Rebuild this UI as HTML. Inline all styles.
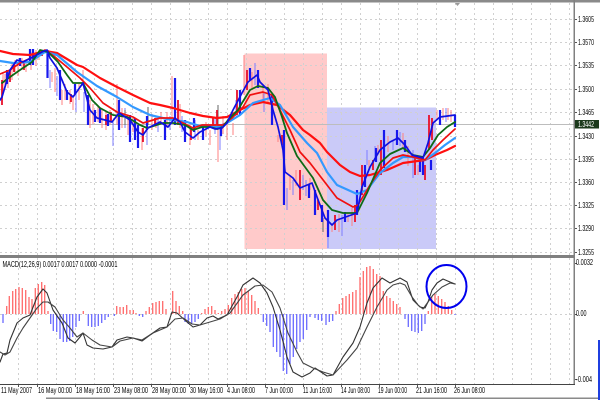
<!DOCTYPE html>
<html><head><meta charset="utf-8"><style>
html,body{margin:0;padding:0;background:#fff;width:600px;height:400px;overflow:hidden}
svg{display:block;filter:blur(.3px)}
text{font-family:"Liberation Sans",sans-serif;font-size:8px;fill:#000}
.l{fill:none;stroke-linejoin:round;stroke-linecap:round}
</style></head><body>
<svg width="600" height="400" viewBox="0 0 600 400" xmlns="http://www.w3.org/2000/svg">
<rect x="244.5" y="53.5" width="82.5" height="195.5" fill="#ffcaca"/>
<rect x="327" y="107.5" width="109" height="141.5" fill="#cacaf8"/>
<path fill="none" stroke="#d0d0d0" stroke-dasharray="2 3" d="M18.5 3V255M37.5 3V255M56.5 3V255M75.5 3V255M94.5 3V255M113.5 3V255M132.5 3V255M151.5 3V255M170.5 3V255M189.5 3V255M208.5 3V255M227.5 3V255M246.5 3V255M265.5 3V255M284.5 3V255M303.5 3V255M322.5 3V255M341.5 3V255M360.5 3V255M379.5 3V255M398.5 3V255M417.5 3V255M436.5 3V255M455.5 3V255M474.5 3V255M493.5 3V255M512.5 3V255M531.5 3V255M550.5 3V255M569.5 3V255
M18.5 258V384M37.5 258V384M56.5 258V384M75.5 258V384M94.5 258V384M113.5 258V384M132.5 258V384M151.5 258V384M170.5 258V384M189.5 258V384M208.5 258V384M227.5 258V384M246.5 258V384M265.5 258V384M284.5 258V384M303.5 258V384M322.5 258V384M341.5 258V384M360.5 258V384M379.5 258V384M398.5 258V384M417.5 258V384M436.5 258V384M455.5 258V384M474.5 258V384M493.5 258V384M512.5 258V384M531.5 258V384M550.5 258V384M569.5 258V384
M0 19.5H574M0 42.5H574M0 65.5H574M0 89.5H574M0 112.5H574M0 136.5H574M0 159.5H574M0 182.5H574M0 205.5H574M0 228.5H574M0 252.5H574M0 314.5H574"/>
<path stroke="#bdbdbd" d="M0 124.5H574"/>

<!-- candles: wicks -->
<path fill="none" stroke="#ff8080" d="M3 72V92M5 74V90M8 70V88M12 62V80M15 60V72M18 64V76M22 58V70M26 60V72M31 52V70M36 50V66M39 52V60M52 72V82M55 68V92M62 90V105M65 84V100M70 90V104M73 95V110M79 84V100M83 70V85M90 100V128M93 104V124M98 106V122M102 110V128M106 112V130M110 110V124M117 84V125M122 108V128M128 115V135M133 118V132M142 128V150M152 114V130M156 116V128M161 112V124M167 112V128M172 76V122M180 104V128M190 125V145M198 130V140M206 122V136M210 130V145M218 123V162M223 116V134M227 125V140M233 123V135M244 55V95M252 72V90M263 85V100M268 84V104M278 135V142M290 175V190M296 170V186M310 178V190M332 225V232M339 214V232M348 213V222M352 208V226M369 160V170M378 145V155M388 136V152M403 133V148M408 146V166M418 165V175M437 110V120M443 108V120M448 108V120M451 110V122"/>
<path fill="none" stroke="#7c7cff" d="M50 70V88M57 76V96M76 92V112M84 92V112M113 120V146M125 108V128M147 130V145M158 118V132M170 116V130M182 116V132M195 120V140M215 118V134M220 125V150M236 100V116M255 63V85M264 92V112M287 188V210M293 180V195M303 175V190M306 180V196M328 237V248M342 215V236M393 140V150M413 150V178M367 150V165M375 146V160M400 132V146M446 108V122"/>
<path fill="none" stroke="#666" d="M125 110V125M148 107V125M218 105V130M323 218V232"/>
<!-- candles: bodies -->
<path fill="none" stroke="#e8102a" stroke-width="1.8" d="M2 80V105M10 70V82M14 64V72M24 62V70M42 50V56M71 94V102M106 115V125M111 112V122M143 128V142M155 118V126M178 100V125M191 128V140M213 118V127M217 110V125M237 90V115M247 70V90M282 135V145M300 170V200M318 200V210M335 215V230M355 205V222M362 165V195M373 160V170M381 140V175M415 158V175M425 165V180M429 115V150M432 118V140"/>
<path fill="none" stroke="#1818ee" stroke-width="2.2" d="M7 70V84M20 58V66M30 49V65M33 49V65M47.5 50V78M60 70V100M67 90V100M75 84V94M88 95V125M95 110V122M100 108V123M108 114V126M119 100V130M130 115V142M135 118V140M138 125V148M147 116V130M165 120V140M175 78V125M185 120V142M194 118V132M203 125V140M221 126V136M240 90V115M250 68V80M258 70V88M272 95V125M284 130V205M309 184V198M315 190V215M322 205V222M328 210V237M345 212V222M357 190V215M365 165V187M376 148V162M384 130V168M397 130V145M405 140V152M420 160V172M423 158V175M431 160V170M440 110V125M455 115V127"/>

<!-- moving averages -->
<path class="l" stroke="#ff1010" stroke-width="2.2" d="M0 51L13 54L30 55L45 51L57 53L77 65L83 67L100 78L117 87L133 95L150 103L160 105L173 108L190 113L203 116L217 118L227 117L240 110L250 105L263 102L277 105L290 115L303 130L310 135L320 143L327 152L340 165L350 172L360 176L370 175L387 170L403 163L425 160L435 155L447 150L455 146"/>
<path class="l" stroke="#3399ff" stroke-width="2.2" d="M0 61L13 63L30 62L45 52L57 55L77 72L97 86L117 97L133 107L150 115L167 119L187 122L200 126L217 127L227 123L240 115L253 103L270 98L280 105L293 127L307 143L317 153L327 172L337 185L357 194L367 190L380 173L393 163L403 157L413 157L425 160L435 153L445 145L455 138"/>
<path class="l" stroke="#f01010" stroke-width="1.7" d="M0 74L10 70L20 63L33 57L45 50L55 57L67 67L80 78L90 88L103 103L117 112L133 117L143 123L160 118L173 118L183 123L193 128L202 125L213 125L223 125L232 118L243 107L250 95L263 92L272 95L280 110L290 130L300 152L310 163L327 185L337 198L353 207L358 205L370 185L380 170L393 158L403 155L413 157L425 160L433 150L443 140L455 129"/>
<path class="l" stroke="#0e6a16" stroke-width="1.8" d="M2 83L10 77L20 70L32 62L40 50L48 52L58 62L67 75L73 83L83 83L92 100L100 108L113 115L127 117L140 125L147 128L163 123L173 123L185 125L193 130L202 127L210 127L217 129L223 127L228 120L238 110L242 103L250 90L258 86L268 88L275 97L282 117L287 133L297 156L313 178L323 200L332 210L343 213L357 213L367 193L380 163L390 154L403 148L413 155L423 157L430 148L438 135L447 127L455 122"/>
<path class="l" stroke="#1010e0" stroke-width="1.7" d="M0 100L2 97L10 70L17 60L23 62L33 57L42 52L47 50L50 58L57 68L62 80L67 92L73 97L83 83L88 103L90 110L97 118L105 120L112 122L119 113L130 120L138 132L143 135L148 128L160 122L168 127L175 118L180 122L185 132L193 138L200 132L210 127L215 129L222 128L227 123L233 110L242 93L248 82L257 75L260 82L268 90L273 110L278 127L283 150L285 172L293 178L300 188L312 183L317 197L325 218L332 225L337 220L357 213L362 187L370 167L380 150L390 142L398 138L405 145L412 155L423 158L428 143L433 123L440 117L455 115"/>

<rect x="0" y="0" width="600" height="2.5" fill="#8a8a8a"/>
<path fill="#999" d="M455 3H460L457.5 6Z"/>
<rect x="0" y="255" width="574" height="3" fill="#808080"/>
<rect x="573.5" y="0" width="1.5" height="385" fill="#808080"/>
<rect x="0" y="384" width="575" height="1" fill="#444"/>
<path stroke="#555" fill="none" d="M575 19.5h2M575 42.5h2M575 65.5h2M575 89.5h2M575 112.5h2M575 136.5h2M575 159.5h2M575 182.5h2M575 205.5h2M575 228.5h2M575 252.5h2M575 263.5h2M575 314.5h2M575 379.5h2M18.5 385v2M37.5 385v2M75.5 385v2M113.5 385v2M151.5 385v2M189.5 385v2M227.5 385v2M265.5 385v2M303.5 385v2M341.5 385v2M379.5 385v2M417.5 385v2M455.5 385v2"/>

<!-- histogram -->
<path fill="none" stroke="#ff6a6a" stroke-width="1.3" d="M6.7 314v-8M9.3 314v-18M12.7 314v-23M15.7 314v-25M19 314v-27M22.3 314v-26M25.7 314v-24M29 314v-17M32 314v-15M35.3 314v-26M38.3 314v-30M41.7 314v-32M44.7 314v-29M48 314v-3M83.3 314v-3M116.7 314v-8M120 314v-7M123.3 314v-7M126.7 314v-9M130 314v-4M133.3 314v-4M136 314v-1M146 314v-3M149.3 314v-7M152.7 314v-11M156 314v-12M159.3 314v-13M162.7 314v-13M166 314v-5M172.7 314v-23M176 314v-13M179.3 314v-8M182.7 314v-3
M201.7 314v-1M205 314v-5M208.3 314v-7M211.7 314v-8M215 314v-4M218.3 314v-1M221.7 314v-3M225 314v-5M228.3 314v-9M231.7 314v-16M235 314v-20M238.3 314v-22M241.7 314v-25M245 314v-26M248.3 314v-23M251.7 314v-19M255 314v-13M258.3 314v-6
M336 314v-3M339.3 314v-10M342.7 314v-16M346 314v-18M349.3 314v-20M352.7 314v-22M356 314v-24M360 314v-37M363.3 314v-43M366.7 314v-47M370 314v-48M373.3 314v-45M376.7 314v-40M380 314v-38M383.3 314v-23M386.7 314v-18M390 314v-16M393.3 314v-13M396.7 314v-10M400 314v-7
M428.3 314v-3M431.7 314v-17M435 314v-20M438.3 314v-18M441.7 314v-15M445 314v-12M448.3 314v-8M451.7 314v-4"/>
<path fill="none" stroke="#6a6aff" stroke-width="1.3" d="M3 314v9M50.7 314v10M53.3 314v17M56.7 314v18M60 314v25M63.3 314v28M66.7 314v28M69.7 314v27M72.7 314v23M76 314v13M79.3 314v7M88.3 314v12M91.7 314v13M95 314v13M98.3 314v12M101.7 314v9M105 314v6M108.3 314v3M114.3 314v2M139.3 314v2M142.7 314v3M185 314v8M188.3 314v10M191.7 314v10M195 314v8M198.3 314v5
M263.3 314v8M266.7 314v12M270 314v18M273.3 314v33M276.7 314v38M280 314v43M283.3 314v57M286.7 314v60M290 314v50M293.3 314v43M296.7 314v35M300 314v28M303.3 314v25M306.7 314v16M310 314v3M315 314v4M318.3 314v6M321.7 314v7M326 314v11M329.3 314v8M332.7 314v7
M405 314v5M408.3 314v13M411.7 314v17M415 314v18M418.3 314v19M421.7 314v17M425 314v10M455 314v1"/>

<!-- MACD lines -->
<path class="l" stroke="#333" stroke-width="1.1" d="M0 362L3 354L7 353L10 340L17 323L23 318L30 315L37 297L43 289L47 293L53 310L62 323L68 338L75 343L80 337L83 333L87 345L93 348L103 349L112 347L117 340L127 337L133 338L142 341L150 335L160 328L167 327L172 312L177 313L187 322L193 327L200 325L207 318L213 316L218 319L227 315L237 297L243 285L253 278L260 283L267 293L273 307L280 330L287 357L293 372L302 377L310 373L315 368L327 376L333 375L343 357L353 343L360 327L367 303L373 288L382 278L390 283L400 278L407 282L413 300L420 307L425 308L428 302L432 290L437 283L443 279L450 282L455 284"/>
<path class="l" stroke="#444" stroke-width="1.1" d="M0 352L5 355L10 352L17 338L23 328L30 318L37 308L43 302L48 302L55 307L63 320L70 328L77 337L83 333L92 340L100 345L112 347L120 341L133 338L142 340L153 333L167 327L175 319L183 318L192 324L200 325L210 322L220 319L230 313L243 295L255 286L263 285L272 292L280 308L288 333L297 352L303 363L313 368L323 372L333 375L347 360L357 348L367 327L377 307L387 290L393 285L400 283L405 285L412 297L418 305L423 309L428 302L433 295L442 287L450 283L455 284"/>

<ellipse cx="446.5" cy="286.5" rx="20" ry="21.5" fill="none" stroke="#0000ee" stroke-width="2"/>

<rect x="575" y="120" width="24" height="8.5" fill="#1c3a1c"/>
<text x="578" y="127" textLength="16" lengthAdjust="spacingAndGlyphs" style="fill:#fff">1.3442</text>
<g>
<text x="578" y="22" textLength="16" lengthAdjust="spacingAndGlyphs">1.3605</text>
<text x="578" y="45" textLength="16" lengthAdjust="spacingAndGlyphs">1.3570</text>
<text x="578" y="68" textLength="16" lengthAdjust="spacingAndGlyphs">1.3535</text>
<text x="578" y="92" textLength="16" lengthAdjust="spacingAndGlyphs">1.3500</text>
<text x="578" y="115" textLength="16" lengthAdjust="spacingAndGlyphs">1.3465</text>
<text x="578" y="139" textLength="16" lengthAdjust="spacingAndGlyphs">1.3430</text>
<text x="578" y="162" textLength="16" lengthAdjust="spacingAndGlyphs">1.3395</text>
<text x="578" y="185" textLength="16" lengthAdjust="spacingAndGlyphs">1.3360</text>
<text x="578" y="208" textLength="16" lengthAdjust="spacingAndGlyphs">1.3325</text>
<text x="578" y="231" textLength="16" lengthAdjust="spacingAndGlyphs">1.3290</text>
<text x="578" y="255" textLength="16" lengthAdjust="spacingAndGlyphs">1.3255</text>
<text x="576" y="265" textLength="17" lengthAdjust="spacingAndGlyphs">0.0032</text>
<text x="576" y="316" textLength="10.5" lengthAdjust="spacingAndGlyphs">0.00</text>
<text x="576" y="382" textLength="16" lengthAdjust="spacingAndGlyphs">-0.004</text>
<text x="2.5" y="267" textLength="115" lengthAdjust="spacingAndGlyphs">MACD(12,26,9) 0.0017 0.0017 0.0000 -0.0001</text>
<text x="1" y="393" textLength="31" lengthAdjust="spacingAndGlyphs">11 May 2007</text>
<text x="38" y="393" textLength="34" lengthAdjust="spacingAndGlyphs">16 May 00:00</text>
<text x="76" y="393" textLength="34" lengthAdjust="spacingAndGlyphs">18 May 16:00</text>
<text x="114" y="393" textLength="34" lengthAdjust="spacingAndGlyphs">23 May 08:00</text>
<text x="152" y="393" textLength="34" lengthAdjust="spacingAndGlyphs">28 May 00:00</text>
<text x="190" y="393" textLength="33" lengthAdjust="spacingAndGlyphs">30 May 16:00</text>
<text x="227" y="393" textLength="28" lengthAdjust="spacingAndGlyphs">4 Jun 08:00</text>
<text x="265" y="393" textLength="28" lengthAdjust="spacingAndGlyphs">7 Jun 00:00</text>
<text x="303" y="393" textLength="29" lengthAdjust="spacingAndGlyphs">11 Jun 16:00</text>
<text x="341" y="393" textLength="29" lengthAdjust="spacingAndGlyphs">14 Jun 08:00</text>
<text x="378" y="393" textLength="29" lengthAdjust="spacingAndGlyphs">19 Jun 00:00</text>
<text x="416" y="393" textLength="31" lengthAdjust="spacingAndGlyphs">21 Jun 16:00</text>
<text x="454" y="393" textLength="31" lengthAdjust="spacingAndGlyphs">26 Jun 08:00</text>
</g>
<rect x="46" y="397.5" width="552" height="1.5" fill="#8a8a8a"/>
<rect x="598" y="340" width="2" height="60" fill="#1f3fe0"/>
</svg>
</body></html>
